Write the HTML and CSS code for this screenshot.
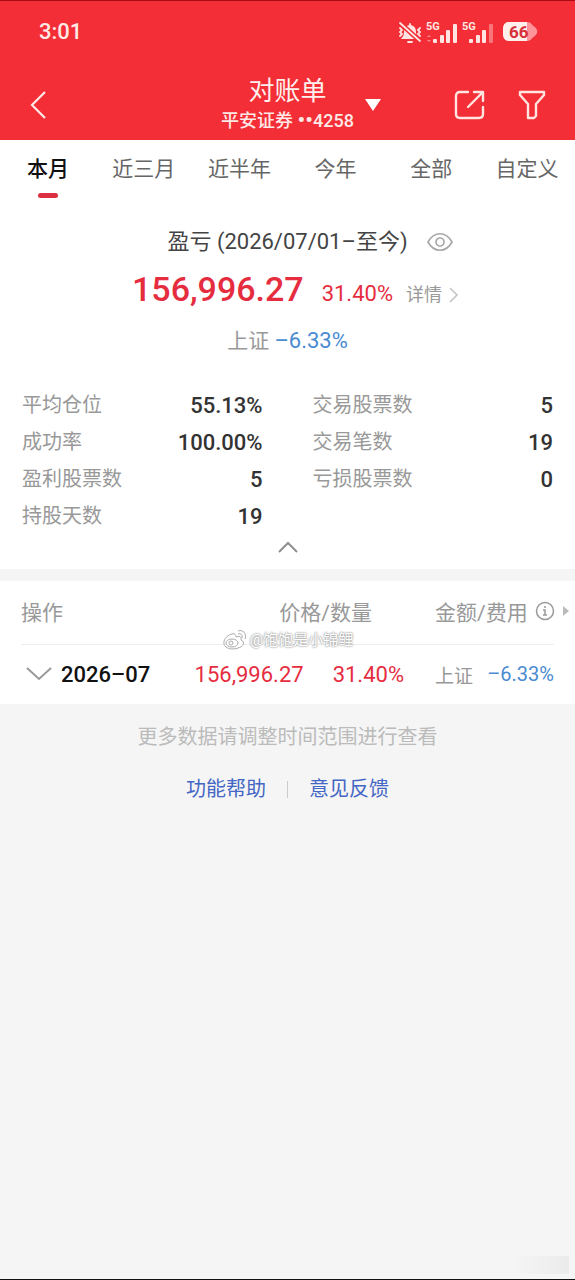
FILE: index.html
```html
<!DOCTYPE html>
<html lang="zh-CN">
<head>
<meta charset="utf-8">
<meta name="viewport" content="width=device-width, initial-scale=1">
<title>对账单</title>
<link rel="stylesheet" href="styles.css">
</head>
<body>
<header class="top">
  <div class="status">
    <time class="clock">3:01</time>
    <div class="status-icons">
      <svg width="26" height="26" viewBox="0 -2 26 26" fill="none" stroke="#ffe4e2" stroke-width="1.8" stroke-linecap="round" aria-hidden="true">
        <path d="M6 17c2-2 2-4 2-7a5 5 0 0 1 10 0c0 3 0 5 2 7z" fill="#ffe4e2"/>
        <path d="M11 21h4M13 3V5M3 7l2 2-2 2 2 2-2 2M23 7l-2 2 2 2-2 2 2 2"/>
        <path d="M3 2l20 18" stroke="#f32e36" stroke-width="5"/>
        <path d="M3 2l20 18"/>
      </svg>
      <svg width="34" height="26" viewBox="0 -3 34 26" fill="#ffe4e2" aria-hidden="true">
        <text class="net" x="1" y="8">5G</text>
        <path d="M2 15l2-2 2 2zM2 18l2 2 2-2z" opacity=".5"/>
        <rect x="8" y="17" width="4" height="4" rx="1"/><rect x="15" y="13" width="4" height="8" rx="1"/><rect x="21" y="8" width="4" height="13" rx="1"/><rect x="28" y="2" width="4" height="19" rx="1"/>
      </svg>
      <svg width="34" height="26" viewBox="0 -3 34 26" fill="#ffe4e2" aria-hidden="true">
        <text class="net" x="1" y="8">5G</text>
        <rect x="8" y="17" width="4" height="4" rx="1"/><rect x="15" y="13" width="4" height="8" rx="1"/><rect x="21" y="8" width="4" height="13" rx="1"/><rect x="28" y="2" width="4" height="19" rx="1" opacity=".4"/>
      </svg>
      <svg class="battery" width="38" height="24" viewBox="0 0 38 24" aria-hidden="true">
        <path d="M8 2h18c4 0 6 3 6 6v6c0 4-2 7-6 7H8c-4 0-6-3-6-7V9c0-4 2-7 6-7z" fill="#ff949b"/>
        <path d="M31 5c7 4 7 9 0 13z" fill="#ff949b"/>
        <path d="M8 2h18v19H8c-4 0-6-3-6-7V9c0-4 2-7 6-7z" fill="#fff0ee"/>
        <text class="level" x="8" y="18">66</text>
      </svg>
    </div>
  </div>
  <nav class="nav">
    <button class="icon-btn back" aria-label="返回"><svg width="18" height="30" viewBox="0 0 18 30" fill="none" stroke="#ffe9e6" stroke-width="2.2"><path d="M16 2L3 15l13 13"/></svg></button>
    <div class="heading">
      <h1 class="title">对账单</h1>
      <p class="account">平安证券 <span class="mask">••</span>4258</p>
    </div>
    <div class="actions">
      <button class="icon-btn pick" aria-label="切换账户"><svg width="18" height="14" viewBox="0 0 18 14"><path d="M1 1h16L9 13z" fill="#fff"/></svg></button>
      <button class="icon-btn" aria-label="分享"><svg width="32" height="32" viewBox="0 0 32 32" fill="none" stroke="#ffe4e0" stroke-width="2.4" stroke-linecap="round" stroke-linejoin="round"><path d="M14 3H6Q2 3 2 7v18q0 4 4 4h19q4 0 4-4v-7M14 18L29 3M20 3h9v9"/></svg></button>
      <button class="icon-btn" aria-label="筛选"><svg width="28" height="30" viewBox="0 0 28 30" fill="none" stroke="#ffe4e0" stroke-width="2.4" stroke-linejoin="round"><path d="M2 2h24v3l-8 9v12l-2 2h-6V14L2 5z"/></svg></button>
    </div>
  </nav>
</header>
<main class="page">
  <div class="tabs" role="tablist">
    <button class="tab active" role="tab" aria-selected="true">本月</button>
    <button class="tab" role="tab">近三月</button>
    <button class="tab" role="tab">近半年</button>
    <button class="tab" role="tab">今年</button>
    <button class="tab" role="tab">全部</button>
    <button class="tab" role="tab">自定义</button>
  </div>
  <section class="summary">
    <div class="period">
      <h2 class="period-title">盈亏 (2026/07/01–至今)</h2>
      <button class="icon-btn eye" aria-label="隐藏金额"><svg width="26" height="20" viewBox="0 0 26 20" fill="none" stroke="#a9a9a9" stroke-width="1.7"><path d="M1 10C7-1 19-1 25 10C19 21 7 21 1 10z"/><circle cx="13" cy="10" r="4"/></svg></button>
    </div>
    <div class="profit">
      <strong class="amount">156,996.27</strong>
      <span class="rate">31.40%</span>
      <a class="detail" href="#detail">详情<svg width="10" height="16" viewBox="0 0 10 16" fill="none" stroke="#c4c4c4" stroke-width="1.6"><path d="M1 1l7 7-7 7"/></svg></a>
    </div>
    <p class="index">上证 <span class="fall">–6.33%</span></p>
    <dl class="stats">
      <div class="stat"><dt>平均仓位</dt><dd>55.13%</dd></div>
      <div class="stat"><dt>交易股票数</dt><dd>5</dd></div>
      <div class="stat"><dt>成功率</dt><dd>100.00%</dd></div>
      <div class="stat"><dt>交易笔数</dt><dd>19</dd></div>
      <div class="stat"><dt>盈利股票数</dt><dd>5</dd></div>
      <div class="stat"><dt>亏损股票数</dt><dd>0</dd></div>
      <div class="stat"><dt>持股天数</dt><dd>19</dd></div>
    </dl>
    <button class="icon-btn fold" aria-label="收起"><svg width="22" height="14" viewBox="0 0 22 14" fill="none" stroke="#8f8f8f" stroke-width="2"><path d="M2 12l9-9 9 9"/></svg></button>
  </section>
  <section class="records">
    <table class="table">
      <thead>
        <tr>
          <th class="c-op">操作</th>
          <th class="c-price">价格/数量</th>
          <th class="c-sum"><span class="sum-head">金额/费用
            <svg width="20" height="20" viewBox="0 0 20 20" fill="none" stroke="#999" stroke-width="1.5"><circle cx="10" cy="10" r="8.5"/><path d="M8 9h2v5M8 14h4M10 5v2"/></svg>
            <svg width="8" height="12" viewBox="0 0 8 12"><path d="M1 1l6 5-6 5z" fill="#bbb"/></svg></span></th>
        </tr>
      </thead>
      <tbody>
        <tr>
          <td class="c-op"><button class="month"><svg width="26" height="16" viewBox="0 0 26 16" fill="none" stroke="#999" stroke-width="2"><path d="M1 2l12 11L25 2"/></svg>2026–07</button></td>
          <td class="c-price"><span class="pair"><span>156,996.27</span><span>31.40%</span></span></td>
          <td class="c-sum"><span class="bench">上证 <span class="fall">–6.33%</span></span></td>
        </tr>
      </tbody>
    </table>
    <div class="watermark">
      <svg width="26" height="22" viewBox="0 0 26 22" fill="#fff" stroke="#aaa" stroke-width="1"><path d="M10 5C5 6 1 11 2 15c1 5 9 6 14 4 5-1 8-6 3-8 1-4-2-4-5-3 0-2-1-4-4-3z"/><ellipse cx="10" cy="14" rx="6" ry="4"/><circle cx="9" cy="14" r="2"/><path d="M16 5c3-1 5 1 4 4M16 2c5-2 9 3 7 8" fill="none"/></svg>
      <span>@饱饱是小锦鲤</span>
    </div>
  </section>
  <p class="hint">更多数据请调整时间范围进行查看</p>
  <div class="links"><a href="#help">功能帮助</a><span class="sep"></span><a href="#feedback">意见反馈</a></div>
</main>
<footer class="bottom"><span class="smudge"></span></footer>
</body>
</html>
```
FILE: styles.css
```css
* { box-sizing: border-box; }
body {
  margin: 0;
  min-height: 100vh;
  display: flex;
  flex-direction: column;
  background: #f5f5f5;
  color: #333;
  font-family: Roboto, "Noto Sans CJK SC", sans-serif;
  font-size: 20px;
}
h1, h2, p, dl, dd { margin: 0; font-weight: 400; }
button { border: 0; padding: 0; background: none; font: inherit; color: inherit; }
a { text-decoration: none; color: inherit; }
svg { display: block; flex: none; }

.top { background: #f32e36; border-top: 1px solid #a80d14; color: #ffe9e6; }
.status { display: flex; justify-content: space-between; align-items: center; padding: 18px 36px 16px 39px; }
.clock { font-size: 22px; line-height: 26px; font-weight: 500; }
.status-icons { display: flex; align-items: center; gap: 2px; }
.battery { margin-left: 4px; }
.net { font: 700 11px Roboto, sans-serif; }
.level { font: 700 17px Roboto, sans-serif; fill: #d6303a; }
.nav { display: grid; grid-template-columns: 1fr auto 1fr; align-items: center; padding: 14px 29px 5px; }
.icon-btn { display: flex; align-items: center; }
.heading { display: flex; flex-direction: column; align-items: center; }
.title { font-size: 26px; line-height: 32px; color: #fff0ee; }
.account { font-size: 18px; line-height: 28px; font-weight: 500; }
.mask { font-size: 22px; line-height: 20px; vertical-align: -1px; }
.actions { display: flex; align-items: center; gap: 32px; }
.pick { margin: 0 auto 0 10px; }

.tabs { display: flex; background: #fff; padding-bottom: 16px; }
.tab { flex: 1; display: flex; flex-direction: column; align-items: center; padding-top: 14px; font-size: 21px; line-height: 30px; color: #666; }
.active { color: #111; font-weight: 500; }
.active::after { content: ""; width: 20px; height: 5px; margin-top: 9px; border-radius: 3px; background: #dc2f42; }

.summary { background: #fff; padding: 12px 22px 15px; display: flex; flex-direction: column; }
.period { display: grid; grid-template-columns: 1fr auto 1fr; align-items: center; }
.period-title { grid-column: 2; font-size: 22px; line-height: 32px; color: #444; }
.eye { margin-left: 19px; }
.profit { display: flex; justify-content: center; align-items: baseline; padding-left: 16px; line-height: 50px; margin-top: 6px; color: #e52d3f; }
.amount { font-size: 34px; font-weight: 500; }
.rate { font-size: 22px; margin-left: 18px; }
.detail { display: flex; align-items: center; gap: 7px; margin-left: 13px; font-size: 18px; color: #999; }
.index { text-align: center; font-size: 21px; line-height: 32px; margin-top: 5px; color: #999; }
.fall { font-size: 22px; color: #4a8bd2; }
.stats { display: grid; grid-template-columns: 1fr 1fr; column-gap: 50px; margin-top: 30px; }
.stat { display: flex; justify-content: space-between; line-height: 37px; }
.stat dt { color: #999; }
.stat dd { font-size: 22px; font-weight: 500; }
.fold { align-self: center; margin-top: 5px; }

.records { position: relative; margin-top: 12px; background: #fff; padding: 0 21px; }
.table { width: 100%; border-collapse: collapse; table-layout: fixed; }
.table th, .table td { padding: 0; height: 63px; text-align: left; font-weight: 400; white-space: nowrap; }
.table td { height: 60px; }
.table thead tr { border-bottom: 1px solid #eee; }
.table th { padding-bottom: 3px; font-size: 21px; color: #999; }
.table .c-op { width: 24%; }
.table .c-price { text-align: right; }
.table th.c-price { padding-right: 63px; }
.table td.c-price { padding-right: 31px; color: #e52d3f; font-size: 22px; }
.table .c-sum { width: 119px; }
.sum-head { display: flex; align-items: center; gap: 7px; }
.month { display: flex; align-items: center; gap: 9px; margin-left: 5px; font-size: 22px; font-weight: 500; color: #111; }
.pair { display: flex; justify-content: flex-end; gap: 29px; }
.bench { display: flex; align-items: center; justify-content: space-between; font-size: 19px; color: #999; }
.bench .fall { font-size: 20px; }
.watermark { position: absolute; top: 47px; left: 0; right: 0; display: flex; justify-content: center; align-items: center; gap: 2px; font-size: 15px; color: #fff; text-shadow: 0 0 2px #888, 0 0 2px #aaa; line-height: 24px; }

.hint { text-align: center; line-height: 30px; margin-top: 18px; color: #bbb; }
.links { display: flex; justify-content: center; align-items: center; gap: 21px; line-height: 30px; margin-top: 22px; color: #4466c4; }
.sep { width: 1px; height: 17px; background: #ccc; }
.bottom { margin-top: auto; display: flex; justify-content: flex-end; padding: 0 6px 5px 0; border-bottom: 1px solid #111; }
.smudge { width: 56px; height: 18px; background: linear-gradient(90deg, #f5f5f5, #ebebeb); }
```
